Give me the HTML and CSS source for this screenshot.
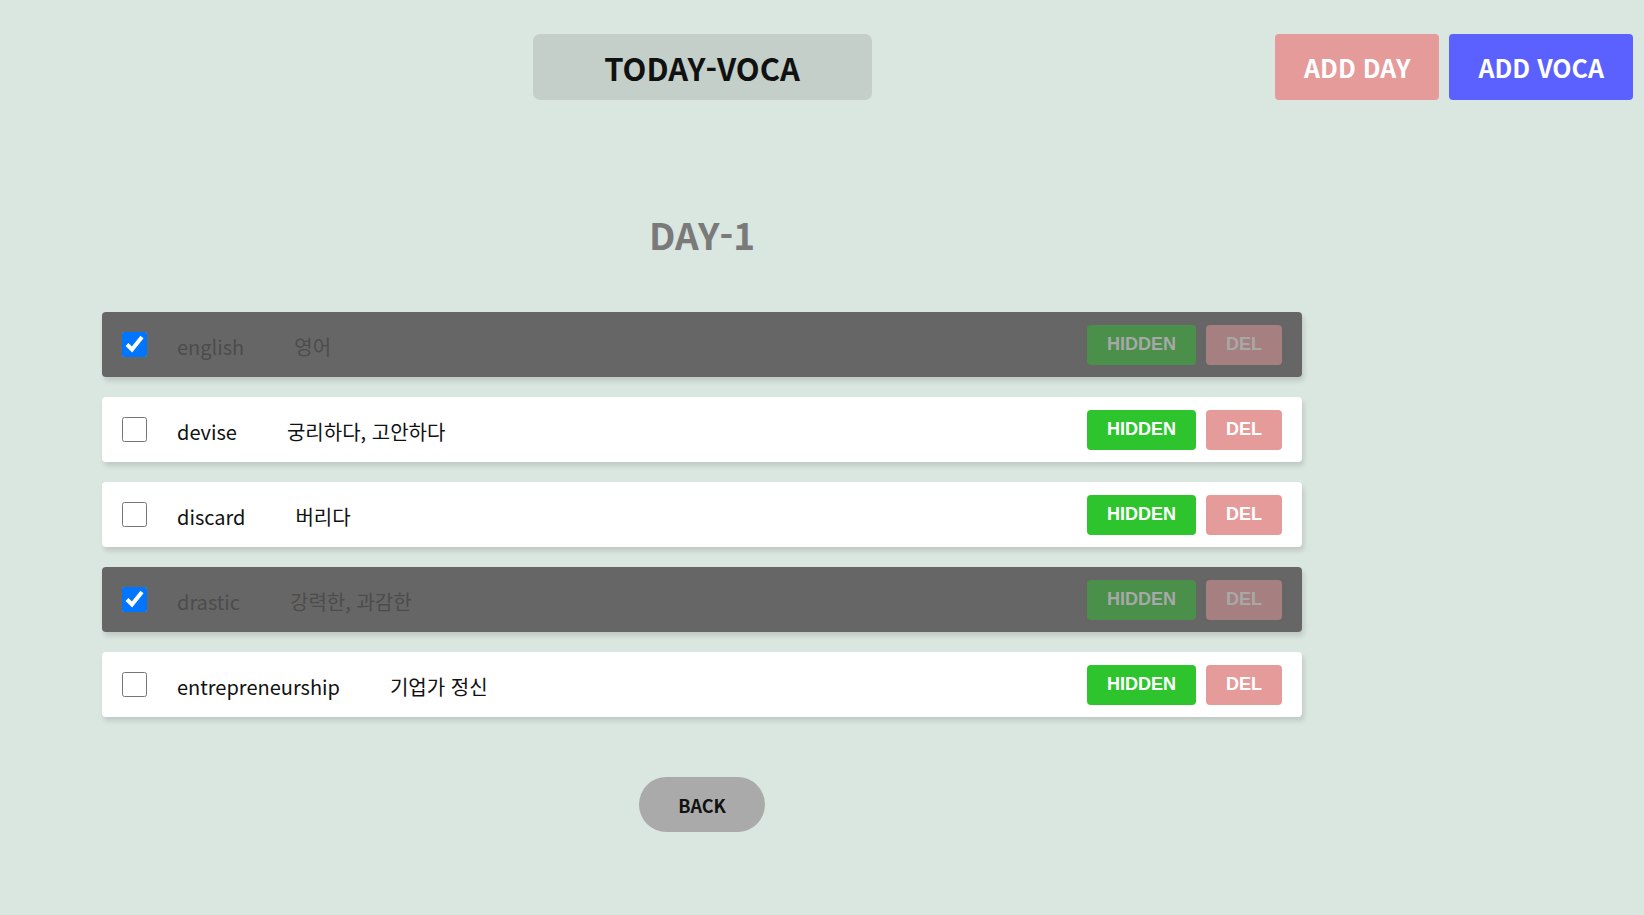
FILE: index.html
```html
<!DOCTYPE html>
<html lang="ko">
<head>
<meta charset="utf-8">
<title>TODAY-VOCA</title>
<link rel="stylesheet" href="styles.css">
</head>
<body>
<div class="app">
  <header class="header">
    <h1 class="logo">TODAY-VOCA</h1>
    <div class="menu">
      <a class="link link-day">ADD DAY</a>
      <a class="link link-voca">ADD VOCA</a>
    </div>
  </header>
  <main class="main">
    <h2 class="day-title">DAY-1</h2>
    <ul class="list">
      <li class="row off">
        <input class="check" type="checkbox" checked>
        <span class="word">english</span>
        <span class="mean">영어</span>
        <span class="actions"><button class="btn btn-hide">HIDDEN</button><button class="btn btn-del">DEL</button></span>
      </li>
      <li class="row">
        <input class="check" type="checkbox">
        <span class="word">devise</span>
        <span class="mean">궁리하다, 고안하다</span>
        <span class="actions"><button class="btn btn-hide">HIDDEN</button><button class="btn btn-del">DEL</button></span>
      </li>
      <li class="row">
        <input class="check" type="checkbox">
        <span class="word">discard</span>
        <span class="mean">버리다</span>
        <span class="actions"><button class="btn btn-hide">HIDDEN</button><button class="btn btn-del">DEL</button></span>
      </li>
      <li class="row off">
        <input class="check" type="checkbox" checked>
        <span class="word">drastic</span>
        <span class="mean">강력한, 과감한</span>
        <span class="actions"><button class="btn btn-hide">HIDDEN</button><button class="btn btn-del">DEL</button></span>
      </li>
      <li class="row">
        <input class="check" type="checkbox">
        <span class="word">entrepreneurship</span>
        <span class="mean">기업가 정신</span>
        <span class="actions"><button class="btn btn-hide">HIDDEN</button><button class="btn btn-del">DEL</button></span>
      </li>
    </ul>
    <button class="back">BACK</button>
  </main>
</div>
</body>
</html>
```
FILE: styles.css
```css
html, body {
  margin: 0;
  padding: 0;
  background: #dae6e0;
  font-family: "Noto Sans CJK KR", "Noto Sans", sans-serif;
  color: #111;
}

.app {
  display: grid;
  grid-template-columns: 102px 1200px 1fr;
}

.header {
  grid-column: 1 / 4;
  display: grid;
  grid-template-columns: 102px 1200px 1fr;
  padding-top: 34px;
}

.logo {
  grid-column: 2;
  grid-row: 1;
  justify-self: center;
  margin: 0;
  width: 339px;
  height: 66px;
  box-sizing: border-box;
  background: #c4cfc9;
  border-radius: 7px;
  display: flex;
  align-items: center;
  justify-content: center;
  font-size: 31px;
  font-weight: 700;
  color: #111;
}

.menu {
  grid-column: 2 / 4;
  grid-row: 1;
  justify-self: end;
  display: flex;
  gap: 10px;
  margin-right: 11px;
}

.link {
  height: 66px;
  box-sizing: border-box;
  padding: 0 29px;
  display: flex;
  align-items: center;
  border-radius: 4px;
  color: #fff;
  font-size: 25px;
  font-weight: 700;
  cursor: pointer;
}

.link-day { background: #e69b9b; }
.link-voca { background: #5a61ff; }

.main {
  grid-column: 2;
  display: flex;
  flex-direction: column;
  align-items: center;
}

.day-title {
  margin: 101px 0 0;
  height: 66px;
  line-height: 66px;
  font-size: 37px;
  font-weight: 700;
  color: #7a7a7a;
}

.list {
  list-style: none;
  margin: 45px 0 0;
  padding: 0;
  width: 1200px;
  display: flex;
  flex-direction: column;
  gap: 20px;
}

.row {
  height: 65px;
  box-sizing: border-box;
  padding: 0 20px;
  background: #fff;
  border-radius: 4px;
  box-shadow: 2px 4px 5px rgba(0, 0, 0, 0.12);
  display: flex;
  align-items: center;
}

.check {
  margin: 0;
  width: 25px;
  height: 25px;
  flex: none;
}

.word {
  margin-left: 30px;
  font-size: 20px;
  color: #111;
  line-height: 1;
  padding-top: 4px;
}

.mean {
  margin-left: 50px;
  font-size: 20px;
  color: #111;
  line-height: 1;
  padding-top: 4px;
}

.actions {
  margin-left: auto;
  display: flex;
  gap: 10px;
}

.btn {
  height: 40px;
  padding: 0 20px;
  border: none;
  border-radius: 4px;
  color: #fff;
  font-family: "Liberation Sans", Arial, sans-serif;
  font-size: 18px;
  font-weight: 700;
  cursor: pointer;
}

.btn-hide { background: #2ec42e; }
.btn-del { background: #e69b9b; }

.row.off {
  background: #666;
}

.row.off .word,
.row.off .mean {
  color: #4c4c4c;
}

.row.off .btn {
  color: #a8a8a8;
}

.row.off .btn-hide { background: #4a8f4a; }
.row.off .btn-del { background: #a67f80; }

.back {
  margin-top: 60px;
  width: 126px;
  height: 55px;
  border: none;
  border-radius: 28px;
  background: #aaa;
  color: #111;
  font-family: "Noto Sans CJK KR", "Noto Sans", sans-serif;
  font-size: 18px;
  font-weight: 700;
  cursor: pointer;
}
```
